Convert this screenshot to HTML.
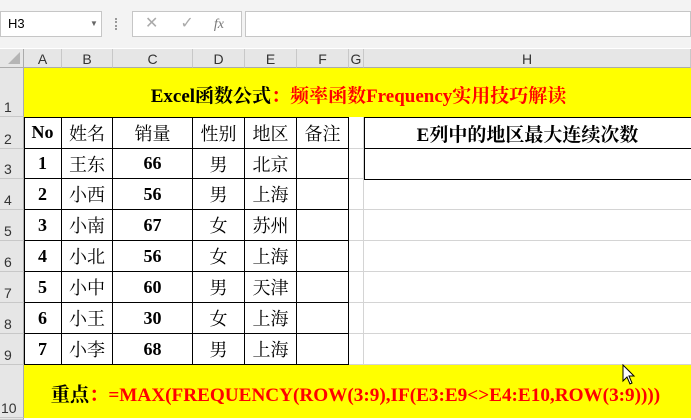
<!DOCTYPE html><html><head><meta charset="utf-8"><style>
*{margin:0;padding:0;box-sizing:border-box}
body{width:691px;height:420px;overflow:hidden;background:#fff;font-family:"Liberation Sans",sans-serif;position:relative}
.a{position:absolute}
.tb{left:0;top:0;width:691px;height:48px;background:#f3f3f3}
.box{background:#fff;border:1px solid #c6c6c6}
.ch{top:49px;height:19px;background:#e6e6e6;border-right:1px solid #c8c8c8;border-bottom:1px solid #ababab;font-size:14px;color:#333;text-align:center;line-height:21px}
.rh{left:0;width:24px;background:#e6e6e6;border-bottom:1px solid #c8c8c8;border-right:1px solid #ababab;font-size:14px;color:#333;padding-left:4px;display:flex;align-items:flex-end;padding-bottom:1px}
.c{border-right:1px solid #000;border-bottom:1px solid #000;display:flex;align-items:center;justify-content:center;font-family:"Liberation Serif","Noto Serif CJK SC",serif;font-size:18px;color:#000}
.b{font-weight:bold}
.g{border-right:1px solid #d4d4d4;border-bottom:1px solid #d4d4d4}
</style></head><body>
<div class="a tb"></div>
<div class="a box" style="left:0;top:11px;width:102px;height:26px;font-size:13px;line-height:24px;padding-left:7px">H3<span style="position:absolute;left:89px;top:0;font-size:8px;color:#666">▼</span></div>
<div class="a" style="left:115px;top:18px;width:2px;height:12px;border-left:2px dotted #999"></div>
<div class="a box" style="left:132px;top:11px;width:110px;height:26px;color:#aaa;font-size:16px;line-height:24px"><span style="margin-left:12px">✕</span><span style="margin-left:22px">✓</span><span style="margin-left:20px;font-family:'Liberation Serif';font-style:italic;font-size:14px;color:#777">fx</span></div>
<div class="a box" style="left:245px;top:11px;width:446px;height:26px"></div>
<div class="a" style="left:0;top:49px;width:24px;height:19px;background:#e6e6e6;border-right:1px solid #ababab;border-bottom:1px solid #ababab"><div style="position:absolute;right:3px;bottom:3px;width:0;height:0;border-left:12px solid transparent;border-bottom:12px solid #b5b5b5"></div></div>
<div class="a ch" style="left:24px;width:38px">A</div>
<div class="a ch" style="left:62px;width:51px">B</div>
<div class="a ch" style="left:113px;width:80px">C</div>
<div class="a ch" style="left:193px;width:52px">D</div>
<div class="a ch" style="left:245px;width:52px">E</div>
<div class="a ch" style="left:297px;width:52px">F</div>
<div class="a ch" style="left:349px;width:15px">G</div>
<div class="a ch" style="left:364px;width:327px">H</div>
<div class="a rh" style="top:68px;height:49px">1</div>
<div class="a rh" style="top:117px;height:32px">2</div>
<div class="a rh" style="top:149px;height:30px">3</div>
<div class="a rh" style="top:179px;height:31px">4</div>
<div class="a rh" style="top:210px;height:31px">5</div>
<div class="a rh" style="top:241px;height:31px">6</div>
<div class="a rh" style="top:272px;height:31px">7</div>
<div class="a rh" style="top:303px;height:31px">8</div>
<div class="a rh" style="top:334px;height:31px">9</div>
<div class="a rh" style="top:365px;height:53px;padding-left:1px">10</div>
<div class="a rh" style="top:418px;height:2px"></div>
<div class="a" style="left:24px;top:68px;width:667px;height:49px;background:#ff0;display:flex;align-items:center;justify-content:center;font-family:'Liberation Serif','Noto Serif CJK SC',serif;font-weight:bold;font-size:19px;padding-top:4px;padding-left:2px"><span>Excel函数公式</span><span style="color:#f00">：频率函数Frequency实用技巧解读</span></div>
<div class="a" style="left:24px;top:365px;width:667px;height:53px;background:#ff0;display:flex;align-items:center;justify-content:center;font-family:'Liberation Serif','Noto Serif CJK SC',serif;font-weight:bold;font-size:19.2px;padding-top:4px;padding-right:4px"><span>重点</span><span style="color:#f00">：=MAX(FREQUENCY(ROW(3:9),IF(E3:E9&lt;&gt;E4:E10,ROW(3:9))))</span></div>
<div id="grid"></div>
<div class="a" style="left:24px;top:117px;width:325px;height:248px;border-top:1px solid #000;border-left:1px solid #000"></div>
<script>
var cols=[[24,62],[62,113],[113,193],[193,245],[245,297],[297,349]];
var rows=[117,149,179,210,241,272,303,334,365];
var data=[["No","姓名","销量","性别","地区","备注"],["1","王东","66","男","北京",""],["2","小西","56","男","上海",""],["3","小南","67","女","苏州",""],["4","小北","56","女","上海",""],["5","小中","60","男","天津",""],["6","小王","30","女","上海",""],["7","小李","68","男","上海",""]];
var h="";
for(var r=0;r<8;r++){for(var c=0;c<6;c++){var b=(c==0||c==2)&&!(r==0&&c==2)?" b":"";h+='<div class="a c'+b+'" style="left:'+cols[c][0]+'px;top:'+rows[r]+'px;width:'+(cols[c][1]-cols[c][0])+'px;height:'+(rows[r+1]-rows[r])+'px">'+data[r][c]+'</div>';}
h+='<div class="a g" style="left:349px;top:'+rows[r]+'px;width:15px;height:'+(rows[r+1]-rows[r])+'px"></div>';
if(r>=2)h+='<div class="a g" style="left:364px;top:'+rows[r]+'px;width:327px;height:'+(rows[r+1]-rows[r])+'px;border-right:none"></div>';}
h+='<div class="a" style="left:364px;top:117px;width:327px;height:63px;border:1px solid #000;border-right:none"></div>';
h+='<div class="a c b" style="left:364px;top:117px;width:327px;height:32px;border:none;font-size:19px">E列中的地区最大连续次数</div>';
h+='<div class="a" style="left:364px;top:148px;width:327px;height:1px;background:#000"></div>';
document.getElementById("grid").innerHTML=h;
</script>
<svg class="a" style="left:622px;top:364px" width="14" height="22" viewBox="0 0 14 22"><path d="M1 1 L1 17 L5 13 L8 20 L10 19 L7 12 L12 12 Z" fill="#fff" stroke="#000" stroke-width="1"/></svg>
</body></html>
